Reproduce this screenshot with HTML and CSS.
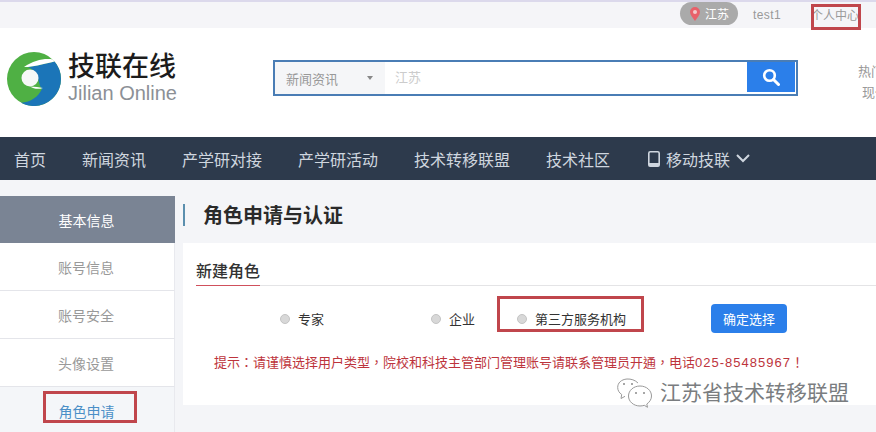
FILE: index.html
```html
<!DOCTYPE html>
<html lang="zh-CN">
<head>
    <meta charset="UTF-8">
    <meta name="viewport" content="width=device-width, initial-scale=1.0">
    <title>角色申请与认证</title>
    <link rel="stylesheet" href="styles.css">
</head>
<body>

    <!-- 顶部栏 -->
    <div class="topbar">
        <span class="city">
            <svg class="pin" width="10" height="14" viewBox="0 0 10 14"><path fill="#e8606a" d="M5 0a5 5 0 0 1 5 5c0 3-3 6-5 9-2-3-5-6-5-9a5 5 0 0 1 5-5z"/><circle cx="5" cy="5" r="2" fill="#f3c9cb"/></svg>
            江苏
        </span>
        <span class="user">test1</span>
        <span class="center-link">个人中心</span>
    </div>

    <!-- logo 和搜索 -->
    <div class="header">
        <div class="logo">
            <svg class="logo-mark" width="54" height="54" viewBox="0 0 54 54">
                <circle cx="27" cy="27" r="27" fill="#4fb044"/>
                <path fill="#1b75b8" d="M21 15C30 14 37 12 47.500 9.500A27 27 0 0 1 14 50.700C24 50 31 45 35 37C31 33 33 20 21 15z"/>
                <path fill="#fff" d="M17 15C27 8 38 6 46 7.500L47.500 9.500C37 12 30 14 21 15z"/>
                <circle cx="23" cy="26" r="8.500" fill="#f6f8f7"/>
                <path fill="#fff" d="M23 34.500C28 35 32 35 36 36C31 37.500 27 37 23 34.500z"/>
            </svg>
            <div class="logo-text">
                <div class="logo-cn">技联在线</div>
                <div class="logo-en">Jilian Online</div>
            </div>
        </div>
        <div class="search">
            <div class="search-type">新闻资讯<i class="caret"></i></div>
            <div class="search-input">江苏</div>
            <div class="search-btn">
                <svg width="18" height="18" viewBox="0 0 18 18"><circle cx="7.5" cy="7.5" r="5.3" fill="none" stroke="#fff" stroke-width="2.6"/><path d="M11.5 11.5l5 5" stroke="#fff" stroke-width="3" stroke-linecap="round"/></svg>
            </div>
        </div>
        <div class="hot">
            <div>热门搜索</div>
            <div class="hot-sub">现代农业</div>
        </div>
    </div>

    <!-- 导航 -->
    <div class="nav">
        <span>首页</span>
        <span>新闻资讯</span>
        <span>产学研对接</span>
        <span>产学研活动</span>
        <span>技术转移联盟</span>
        <span>技术社区</span>
        <span class="nav-mobile">
            <svg width="12" height="16" viewBox="0 0 12 16"><rect x="0.8" y="0.8" width="10.4" height="14.4" rx="1.5" fill="none" stroke="#cfd6df" stroke-width="1.6"/><rect x="0.8" y="12" width="10.4" height="3.2" fill="#cfd6df"/></svg>
            移动技联
            <svg width="14" height="9" viewBox="0 0 14 9"><path d="M1 1l6 6 6-6" fill="none" stroke="#cfd6df" stroke-width="2"/></svg>
        </span>
    </div>

    <div class="page">
        <!-- 左侧菜单 -->
        <div class="side">
            <div class="side-title">基本信息</div>
            <div class="side-item">账号信息</div>
            <div class="side-item">账号安全</div>
            <div class="side-item">头像设置</div>
            <div class="side-item current">角色申请</div>
        </div>

        <div class="main">
            <h1 class="main-title">角色申请与认证</h1>
            <div class="card">
                <div class="card-head"><span>新建角色</span></div>
                <div class="roles">
                    <label class="role role-expert"><i class="radio"></i>专家</label>
                    <label class="role role-company"><i class="radio"></i>企业</label>
                    <label class="role role-third"><i class="radio"></i>第三方服务机构</label>
                    <button class="confirm">确定选择</button>
                </div>
                <p class="notice" lang="zh-TW">提示：请谨慎选择用户类型，院校和科技主管部门管理账号请联系管理员开通，电话<span class="phone">025-85485967</span>！</p>
            </div>
        </div>
    </div>

    <!-- 截图上的红框 -->
    <div class="mark mark-center"></div>
    <div class="mark mark-third"></div>
    <div class="mark mark-role"></div>

    <!-- 公众号水印 -->
    <div class="watermark">
        <svg width="36" height="30" viewBox="0 0 36 30" fill="none" stroke="#9a9a9a" stroke-width="1">
            <path d="M21 5C18 2 14 .8 10 1 4 1.500 .7 5 .7 9.500c0 3 1.600 5.500 4 7L4 20.500l4-2.200"/>
            <path d="M34.500 18c0-5.500-5-10-11.500-10S11.500 12.500 11.500 18 16.500 28 23 28c1.600 0 3-.3 4.300-.7l3.200 2-.7-3.300c2.900-1.900 4.700-4.800 4.700-8z"/>
            <circle cx="7" cy="6" r="1" fill="#8a8a8a" stroke="none"/>
            <circle cx="15" cy="6" r="1" fill="#8a8a8a" stroke="none"/>
            <circle cx="19" cy="15" r="1" fill="#8a8a8a" stroke="none"/>
            <circle cx="27" cy="15" r="1" fill="#8a8a8a" stroke="none"/>
        </svg>
        <span>江苏省技术转移联盟</span>
    </div>

</body>
</html>
```

FILE: styles.css
```css
html, body {
    margin: 0;
    height: 432px;
    overflow: hidden;
}

body {
    position: relative;
    background-color: #f4f5f8;
    font-family: "Liberation Sans", "Noto Sans CJK SC", sans-serif;
    color: #333;
}

/* 顶部栏 */
.topbar {
    display: flex;
    justify-content: flex-end;
    align-items: center;
    box-sizing: border-box;
    height: 28px;
    padding: 0 17px 1px 0;
    border-top: 2px solid #dcd9ec;
    background-color: #f5f5f8;
    font-size: 12px;
    color: #999;
}

.city {
    display: flex;
    align-items: center;
    gap: 5px;
    box-sizing: border-box;
    width: 58px;
    height: 23px;
    margin-top: -2px;
    padding-left: 10px;
    border-radius: 12px;
    background-color: #aaa;
    color: #fff;
}

.user {
    margin-left: 15px;
    letter-spacing: 0.4px;
}

.center-link {
    margin-left: 30px;
}

/* logo 和搜索 */
.header {
    display: flex;
    height: 109px;
    background-color: #fff;
    overflow: hidden;
}

.logo {
    display: flex;
    flex: none;
    width: 273px;
    padding: 24px 0 0 7px;
    box-sizing: border-box;
}

.logo-text {
    margin-left: 7px;
}

.logo-cn {
    margin-top: -1px;
    font-size: 27px;
    line-height: 32px;
    font-weight: 500;
    color: #1c1c1c;
}

.logo-en {
    font-size: 20px;
    line-height: 22px;
    margin-top: -1px;
    color: #8c9096;
}

.search {
    display: flex;
    flex: none;
    box-sizing: border-box;
    width: 525px;
    height: 36px;
    margin-top: 32px;
    border: 2px solid #4a7db5;
    font-size: 13px;
}

.search-type {
    display: flex;
    align-items: center;
    box-sizing: border-box;
    width: 110px;
    padding-left: 11px;
    background-color: #f5f6f8;
    color: #999;
}

.caret {
    margin-left: 29px;
    border-top: 4px solid #888;
    border-left: 3px solid transparent;
    border-right: 3px solid transparent;
}

.search-input {
    flex: 1;
    padding-left: 10px;
    line-height: 32px;
    color: #ccc;
}

.search-btn {
    display: flex;
    align-items: center;
    justify-content: center;
    width: 48px;
    height: 30px;
    margin-right: 1px;
    background-color: #2b7fea;
}

.hot {
    flex: none;
    width: 80px;
    margin: 33px 0 0 60px;
    font-size: 13px;
    line-height: 21px;
    color: #999;
    white-space: nowrap;
}

.hot-sub {
    padding-left: 4px;
}

/* 导航 */
.nav {
    display: flex;
    align-items: center;
    gap: 36px;
    box-sizing: border-box;
    height: 43px;
    padding-left: 14px;
    background-color: #2d3a4c;
    font-size: 16px;
    color: #cfd6df;
}

.nav-mobile {
    display: flex;
    align-items: center;
    gap: 6px;
    margin-left: 2px;
}

/* 主体 */
.page {
    display: flex;
    padding-top: 16px;
}

.side {
    flex: none;
    width: 175px;
    font-size: 14px;
    text-align: center;
    color: #999;
}

.side-title {
    height: 47px;
    padding-right: 2px;
    line-height: 50px;
    background-color: #7a8494;
    color: #fff;
}

.side-item {
    box-sizing: border-box;
    height: 48px;
    padding-right: 2px;
    line-height: 50px;
    background-color: #fff;
    border-right: 1px solid #e8e9ee;
    border-bottom: 1px solid #e4e5ea;
}

.side-item.current {
    padding-right: 1px;
    background-color: #f4f6f9;
    color: #4b8fc7;
    border-bottom: none;
}

.main {
    flex: 1;
    margin-left: 8px;
}

.main-title {
    box-sizing: border-box;
    height: 22px;
    margin: 8px 0 17px;
    padding-left: 18px;
    border-left: 2px solid #5b8fae;
    font-size: 20px;
    line-height: 24px;
    font-weight: 700;
    color: #2a2a2a;
}

.card {
    box-sizing: border-box;
    height: 162px;
    padding-left: 13px;
    background-color: #fff;
}

.card-head {
    box-sizing: border-box;
    height: 43px;
    padding-top: 17px;
    border-bottom: 1px solid #e4e4e6;
    font-size: 16px;
    line-height: 24px;
    font-weight: 500;
}

.card-head span {
    display: inline-block;
    vertical-align: top;
    box-sizing: border-box;
    height: 26px;
    border-bottom: 1px solid #d0505c;
}

.roles {
    display: flex;
    align-items: center;
    height: 29px;
    margin-top: 18px;
    font-size: 13px;
}

.role {
    display: flex;
    align-items: center;
    gap: 8px;
}

.radio {
    box-sizing: border-box;
    width: 10px;
    height: 10px;
    border: 1px solid #c4c4c4;
    border-radius: 50%;
    background-color: #d8d8d8;
}

.role-expert {
    margin-left: 84px;
}

.role-company {
    margin-left: 107px;
}

.role-third {
    margin-left: 42px;
}

.confirm {
    width: 76px;
    height: 29px;
    margin-left: 85px;
    padding: 0;
    border: none;
    border-radius: 4px;
    background-color: #2b7fea;
    color: #fff;
    font-family: inherit;
    font-size: 13px;
}

.notice {
    margin: 21px 0 0 18px;
    font-family: "Liberation Sans", "Noto Sans CJK TC", sans-serif;
    font-size: 13px;
    line-height: 18px;
    color: #bd343c;
    white-space: nowrap;
}

.phone {
    letter-spacing: 1px;
}

/* 红框 */
.mark {
    position: absolute;
    box-sizing: border-box;
    border: 3px solid #c0464c;
}

.mark-center {
    left: 811px;
    top: 4px;
    width: 50px;
    height: 26px;
}

.mark-third {
    left: 497px;
    top: 296px;
    width: 147px;
    height: 36px;
}

.mark-role {
    left: 43px;
    top: 391px;
    width: 94px;
    height: 32px;
}

/* 水印 */
.watermark {
    position: absolute;
    left: 617px;
    top: 378px;
    display: flex;
    align-items: center;
    gap: 7px;
    font-size: 21px;
    line-height: 30px;
    color: #7a7d80;
    text-shadow: 0 0 2px #fff, 0 0 2px #fff;
    white-space: nowrap;
}
```
